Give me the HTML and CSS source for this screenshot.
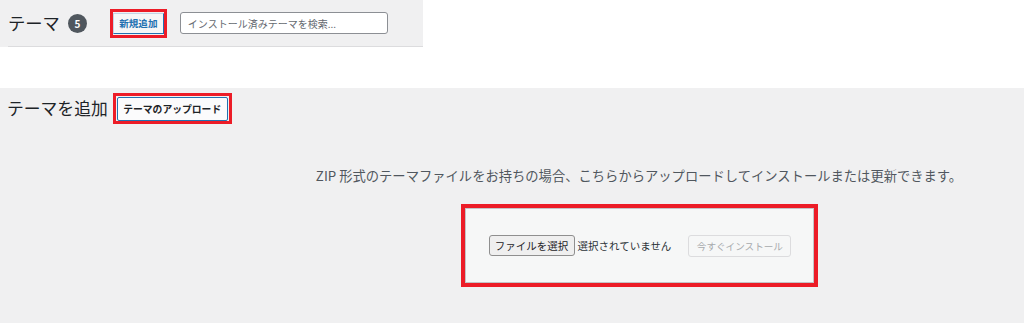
FILE: index.html
```html
<!DOCTYPE html>
<html lang="ja">
<head>
<meta charset="utf-8">
<title>テーマを追加</title>
<link rel="stylesheet" href="styles.css">
</head>
<body>
<div class="top">
  <div class="top-bar">
    <h1 class="top-title">テーマ</h1>
    <span class="badge">5</span>
    <span class="hl hl-small"><a class="add-btn">新規追加</a></span>
    <input class="search" type="search" placeholder="インストール済みテーマを検索...">
  </div>
</div>
<div class="gap"></div>
<div class="main">
  <div class="heading">
    <h2 class="main-title">テーマを追加</h2>
    <span class="hl hl-upload"><button class="upload-btn">テーマのアップロード</button></span>
  </div>
  <div class="upload-area">
    <p class="help">ZIP 形式のテーマファイルをお持ちの場合、こちらからアップロードしてインストールまたは更新できます。</p>
    <div class="hl-box">
      <div class="form-panel">
        <span class="file-btn">ファイルを選択</span>
        <span class="file-status">選択されていません</span>
        <span class="install-btn">今すぐインストール</span>
      </div>
    </div>
  </div>
</div>
</body>
</html>
```
FILE: styles.css
```css
* { box-sizing: border-box; }
body {
  margin: 0;
  background: #fff;
  font-family: "Noto Sans CJK JP", "Noto Sans", sans-serif;
  color: #1d2327;
  height: 323px;
  overflow: hidden;
}
.top {
  width: 423px;
  height: 47px;
  background: #f0f0f1;
  padding-left: 8px;
}
.top-bar {
  height: 47px;
  border-bottom: 1px solid #dcdcde;
  display: flex;
  align-items: center;
}
.top-title {
  margin: 0;
  font-size: 17.3px;
  font-weight: 400;
  color: #1d2327;
  line-height: 1;
}
.badge {
  width: 19px;
  height: 19px;
  border-radius: 50%;
  background: #50575e;
  color: #fff;
  font-size: 10px;
  font-weight: 700;
  display: flex;
  align-items: center;
  justify-content: center;
  margin-left: 8px;
}
.hl {
  display: inline-flex;
  border: 3px solid #ec1c27;
}
.hl-small {
  margin-left: 23px;
  height: 29px;
  width: 57px;
  padding: 0;
  align-items: center;
  justify-content: center;
}
.add-btn {
  width: 51px;
  height: 21px;
  border: 1px solid #2271b1;
  border-top-color: #c3d5e6;
  border-left-color: #c3d5e6;
  background: #f6f7f7;
  color: #2271b1;
  font-size: 9.6px;
  font-weight: 700;
  display: flex;
  align-items: center;
  justify-content: center;
}
.search {
  margin-left: 13px;
  width: 208px;
  height: 22px;
  border: 1px solid #8c8f94;
  border-radius: 3px;
  background: #fff;
  padding: 0 7px;
  font-family: inherit;
  font-size: 10px;
  color: #2c3338;
}
.search::placeholder { color: #646970; }
.gap { height: 41px; }
.main {
  background: #f0f0f1;
  height: 235px;
}
.heading {
  display: flex;
  align-items: center;
  padding: 5px 0 0 7px;
}
.main-title {
  margin: 0;
  font-size: 16.8px;
  font-weight: 400;
  color: #1d2327;
  line-height: 1;
}
.hl-upload {
  margin-left: 5px;
  width: 119px;
  height: 31px;
  align-items: center;
  justify-content: center;
}
.upload-btn {
  width: 111px;
  height: 24px;
  border: 1px solid #2271b1;
  border-radius: 2px;
  background: #fbfbfc;
  color: #1d2327;
  font-family: inherit;
  font-size: 9.8px;
  font-weight: 700;
  padding: 0;
  display: flex;
  align-items: center;
  justify-content: center;
}
.upload-area {
  margin-left: 254px;
  width: 770px;
  text-align: center;
}
.help {
  margin: 42px 0 0;
  font-size: 13.3px;
  line-height: 20px;
  color: #50575e;
}
.hl-box {
  width: 357px;
  height: 83px;
  margin: 18px auto 0;
  border: 4px solid #ec1c27;
}
.form-panel {
  height: 75px;
  border: 1px solid #c3c4c7;
  background: #f6f7f7;
  display: flex;
  align-items: center;
  padding-left: 23px;
}
.file-btn {
  width: 86px;
  height: 21px;
  border: 1px solid #8f8f8f;
  border-radius: 3px;
  background: #efefef;
  color: #1d2327;
  font-size: 10.5px;
  display: flex;
  align-items: center;
  justify-content: center;
}
.file-status {
  margin-left: 3px;
  font-size: 10.5px;
  color: #2c3338;
}
.install-btn {
  margin-left: 17px;
  width: 103px;
  height: 22px;
  border: 1px solid #dcdcde;
  border-radius: 3px;
  background: #f6f7f7;
  color: #a7aaad;
  font-size: 9.6px;
  display: flex;
  align-items: center;
  justify-content: center;
}
```
